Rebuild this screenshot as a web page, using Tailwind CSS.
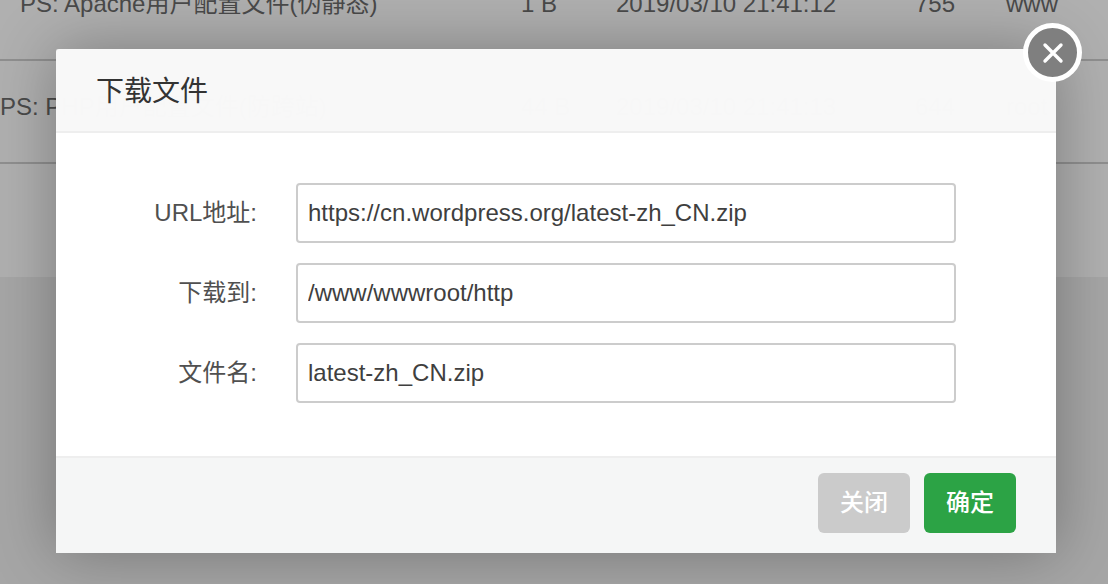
<!DOCTYPE html>
<html lang="zh-CN">

<head>
    <meta charset="UTF-8">
    <title>下载文件</title>
    <script src="https://cdn.jsdelivr.net/npm/@tailwindcss/browser@4"></script>
</head>

<body class="bg-[#a6a6a6] font-['Liberation_Sans','Noto_Sans_CJK_SC',sans-serif] text-[24px]">

    <div class="relative h-[584px] w-[1108px] overflow-hidden">

        <!-- file list behind the dialog -->
        <div class="-mt-[43px] h-[320px] bg-[#b0b0b0] text-[#4a4a4a]">
            <div class="flex h-[104px] border-b-2 border-[#8f8f8f] pt-[30px] leading-[34px]">
                <span class="ml-[20px] w-[501px]">PS: Apache用户配置文件(伪静态)</span>
                <span class="w-[95px]">1 B</span>
                <span class="w-[299px]">2019/03/10 21:41:12</span>
                <span class="w-[91px]">755</span>
                <span>www</span>
            </div>
            <div class="mt-[-1px] flex h-[104px] border-b-2 border-[#8f8f8f] pt-[30px] leading-[34px]">
                <span class="ml-[0px] w-[521px]">PS: PHP用户配置文件(防跨站)</span>
                <span class="w-[95px]">44 B</span>
                <span class="w-[299px]">2019/03/10 21:41:13</span>
                <span class="w-[91px]">644</span>
                <span>root</span>
            </div>
        </div>

        <div class="absolute top-[49px] left-[56px] w-[1000px] shadow-[0_0_60px_rgba(0,0,0,0.3)]">
            <div class="h-[84px] rounded-t-[3px] border-b-2 border-[#eeeeee] bg-[#f9f9f9]/99 pt-[22px] pl-[40px] text-[28px] leading-[42px] text-[#333333]">下载文件</div>

            <div class="flex h-[323px] flex-col gap-5 bg-white pt-[50px] text-[#505050]">
                <label class="flex items-center">
                    <span class="w-[201px] text-right">URL地址:</span>
                    <input class="ml-[39px] h-[60px] w-[660px] rounded border-2 border-[#cccccc] px-[10px] text-[#3f3f3f]" value="https://cn.wordpress.org/latest-zh_CN.zip">
                </label>
                <label class="flex items-center">
                    <span class="w-[201px] text-right">下载到:</span>
                    <input class="ml-[39px] h-[60px] w-[660px] rounded border-2 border-[#cccccc] px-[10px] text-[#3f3f3f]" value="/www/wwwroot/http">
                </label>
                <label class="flex items-center">
                    <span class="w-[201px] text-right">文件名:</span>
                    <input class="ml-[39px] h-[60px] w-[660px] rounded border-2 border-[#cccccc] px-[10px] text-[#3f3f3f]" value="latest-zh_CN.zip">
                </label>
            </div>

            <div class="flex h-[97px] justify-end gap-[14px] border-t-2 border-[#eeeeee] bg-[#f5f6f6] pt-[15px] pr-[40px]">
                <button class="h-[60px] w-[92px] rounded-md bg-[#cbcbcb] font-medium text-white">关闭</button>
                <button class="h-[60px] w-[92px] rounded-md bg-[#2ca345] font-medium text-white">确定</button>
            </div>

            <!-- close button -->
            <button class="absolute -top-[26px] -right-[26px] flex h-[59px] w-[59px] items-center justify-center rounded-full border-[5px] border-white bg-[#7f7f7f]">
                <svg width="22" height="22" viewBox="0 0 22 22" fill="none" stroke="white" stroke-width="3.4" stroke-linecap="round">
                    <path d="M3 3L19 19M19 3L3 19" />
                </svg>
            </button>
        </div>
    </div>

</body>

</html>
